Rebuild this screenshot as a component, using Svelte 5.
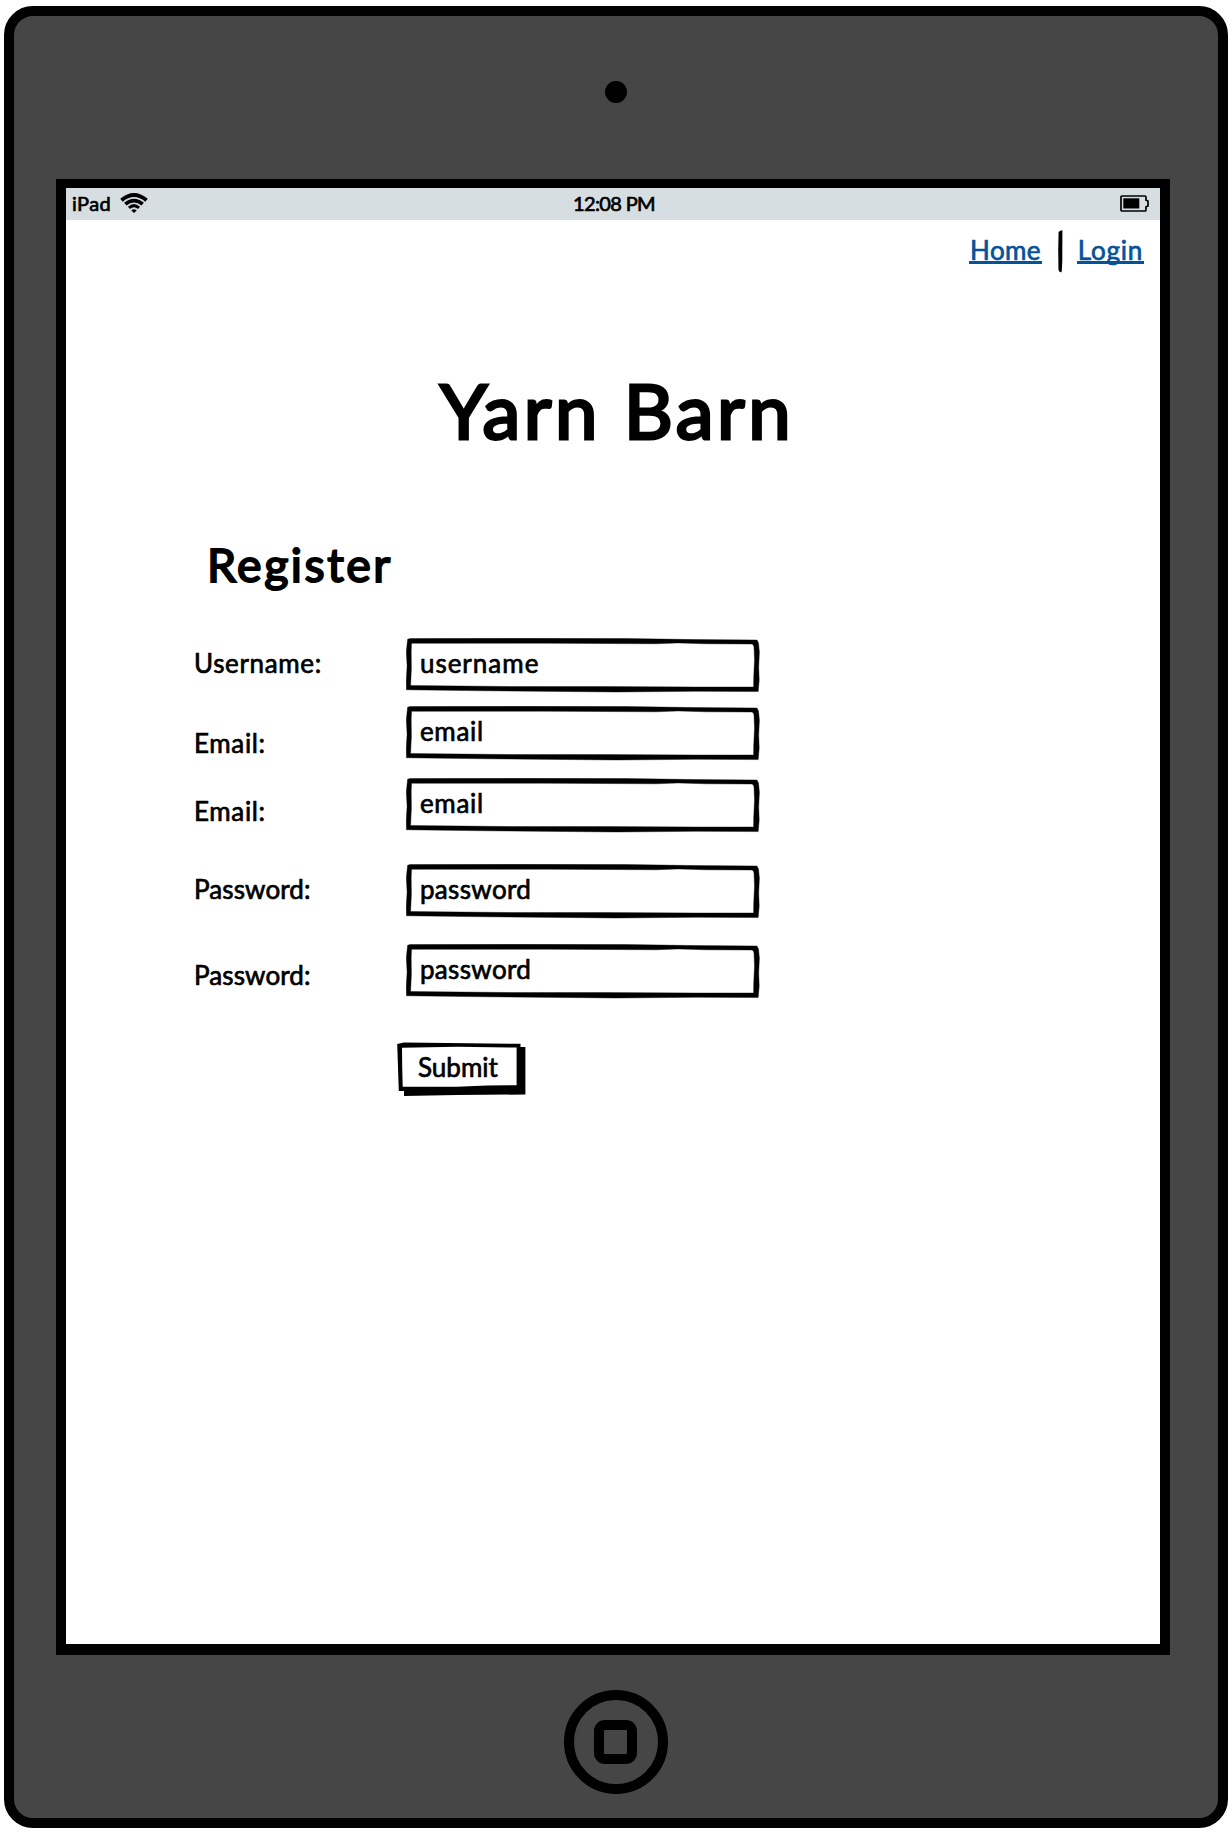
<script>
  const fields = [
    { id: 'username', label: 'Username:', value: 'username' },
    { id: 'email', label: 'Email:', value: 'email' },
    { id: 'email-confirm', label: 'Email:', value: 'email' },
    { id: 'password', label: 'Password:', value: 'password' },
    { id: 'password-confirm', label: 'Password:', value: 'password' }
  ];
</script>

<div class="page">
  <div class="tablet">
    <div class="top-bezel"><span class="camera"></span></div>
    <div class="screen">
      <header class="status">
        <div class="carrier">
          <span class="ipad">iPad</span>
          <svg width="28" height="20" viewBox="0 0 28 20" fill="none" stroke="#000">
            <path d="M1.5 7.2Q14 -3 26.5 7.2" stroke-width="3.9" />
            <path d="M5.3 11.2Q14 4 22.7 11.2" stroke-width="3.6" />
            <path d="M9 14.8Q14 10.4 19 14.8" stroke-width="3.1" />
            <path d="M11.3 17.4Q14 15.2 16.7 17.4L14 20Z" fill="#000" stroke="none" />
          </svg>
        </div>
        <time>12:08 PM</time>
        <div class="battery">
          <svg width="29" height="17" viewBox="0 0 29 17">
            <path d="M2 1H25Q26 1 26 3V5.2L28 6V11L26 11.8V14Q26 16 25 16H2Q1 16 1 15V2Q1 1 2 1Z" fill="none" stroke="#000" stroke-width="1.7" />
            <rect x="3.3" y="3.3" width="16" height="10.2" />
          </svg>
        </div>
      </header>

      <nav>
        <span class="link home">Home</span>
        <svg class="divider" width="5" height="43" viewBox="0 0 5 43">
          <path d="M.6 2Q2 .2 4.4 .2L4.3 30Q4 39 3.6 42Q1.7 43 .5 40L.2 20Z" />
        </svg>
        <span class="link login">Login</span>
      </nav>

      <h1>Yarn Barn</h1>
      <h2>Register</h2>

      <form>
        {#each fields as field}
          <div class="row {field.id}">
            <span class="label">{field.label}</span>
            <div class="input">
              <svg width="354" height="55" viewBox="0 0 354 55">
                <path fill-rule="evenodd" stroke="#000" stroke-width=".4" d="M1.6 1.3L4 .6L130 .2L220 .5L290 1.6L351 2L352.5 5L353.4 14L352.7 29L353.2 42L352.2 53.6L290 53.3L210 54L80 52.8L.4 51.8L.2 43L1.1 28L.3 14ZM5.5 5.3L5.2 14L5.4 30L4.6 47.5L110 48.6L200 48.6L290 49L347.6 49L347.7 40L348.5 22L348 9Q347.8 6.7 346 6L300 5.8L272 4.9L250 5.8L140 5.2Z" />
              </svg>
              <span>{field.value}</span>
            </div>
          </div>
        {/each}
        <div class="submit">
          <svg width="129" height="55" viewBox="0 0 129 55">
            <path fill-rule="evenodd" d="M.2 2L7 .6L50 1L123.5 1.8V5H128.4V52.5L60 53L7 54V49H1.8L1 25ZM5 5.8L5.2 25L5.7 44.8L60 44.7L90 43.4L119.6 43.2V5.6L60 4.8Z" />
          </svg>
          <span>Submit</span>
        </div>
      </form>
    </div>
    <div class="bottom-bezel">
      <div class="home-button"><span></span></div>
    </div>
  </div>
</div>

<style>
  :global(body) { background: #fff; }
  * { box-sizing: border-box; }
  .page {
    width: 1232px;
    height: 1832px;
    padding: 6px 4px 4px;
    overflow: hidden;
    font-family: Lato, "Open Sans", sans-serif;
    font-size: 26px;
    color: #000;
    white-space: nowrap;
    -webkit-text-stroke: 0.7px currentColor;
  }
  .tablet {
    height: 1822px;
    border: 10px solid #000;
    border-radius: 29px;
    background: #464646;
    display: flex;
    flex-direction: column;
    align-items: center;
  }
  .top-bezel { height: 163px; padding-top: 65px; flex: none; }
  .camera { display: block; width: 22px; height: 22px; border-radius: 50%; background: #000; }
  .screen {
    width: 1114px;
    height: 1476px;
    margin-right: 6px;
    flex: none;
    border: 10px solid #000;
    border-top-width: 9px;
    border-bottom-width: 11px;
    background: #fff;
  }
  .status {
    height: 32px;
    background: #d7dee1;
    display: grid;
    grid-template-columns: 1fr auto 1fr;
    align-items: center;
    padding: 0 11px 2px 6px;
    font-size: 20px;
    line-height: 29px;
  }
  .status time { letter-spacing: -0.65px; padding-left: 7px; }
  .ipad { letter-spacing: 0.4px; }
  .carrier { display: flex; align-items: center; gap: 9px; }
  .battery { display: flex; justify-content: flex-end; padding-top: 1px; }
  nav {
    height: 64px;
    padding: 10px 16px 0 0;
    display: flex;
    justify-content: flex-end;
    align-items: flex-start;
  }
  .link {
    height: 34px;
    line-height: 40px;
    color: #04529a;
    border-bottom: 3px solid #04529a;
    text-align: center;
  }
  .home { width: 73px; letter-spacing: 0.4px; }
  .login { width: 67px; letter-spacing: 0.8px; }
  .divider { margin: 0 14px 0 16px; }
  h1 {
    margin: 79px 0 0 374px;
    font-size: 76px;
    line-height: 94px;
    font-weight: 400;
    letter-spacing: 3.5px;
    -webkit-text-stroke: 3px currentColor;
  }
  h2 {
    margin: 77px 0 0 141px;
    font-size: 46.5px;
    line-height: 60px;
    font-weight: 400;
    letter-spacing: 2.5px;
    -webkit-text-stroke: 2px currentColor;
  }
  form { padding: 44px 0 0 128px; }
  .row { display: flex; height: 53px; }
  .label { width: 212.4px; line-height: 51px; letter-spacing: 0.65px; }
  .input, .submit { display: grid; }
  .input > *, .submit > * { grid-area: 1 / 1; }
  .input span { line-height: 51px; padding-left: 13.5px; letter-spacing: 0.7px; }
  .username .input span { letter-spacing: 1px; }
  .password .label, .password-confirm .label { letter-spacing: 0.1px; }
  .password .input span, .password-confirm .input span { letter-spacing: 0.35px; }
  .email { margin-top: 15px; }
  .email .label { padding-top: 12px; }
  .email-confirm { margin-top: 19px; }
  .email-confirm .label { padding-top: 8px; }
  .password { margin-top: 33px; }
  .password-confirm { margin-top: 27px; }
  .password-confirm .label { padding-top: 6px; }
  .submit { margin: 45px 0 0 203px; width: 129px; height: 55px; }
  .submit span { line-height: 51px; padding-left: 21px; }
  .bottom-bezel { padding-top: 35px; }
  .home-button {
    width: 104px;
    height: 104px;
    border: 10px solid #000;
    border-radius: 50%;
    display: flex;
    align-items: center;
    justify-content: center;
  }
  .home-button span { width: 43px; height: 44px; margin-right: 1px; border: 10px solid #000; border-radius: 11px; }
</style>
